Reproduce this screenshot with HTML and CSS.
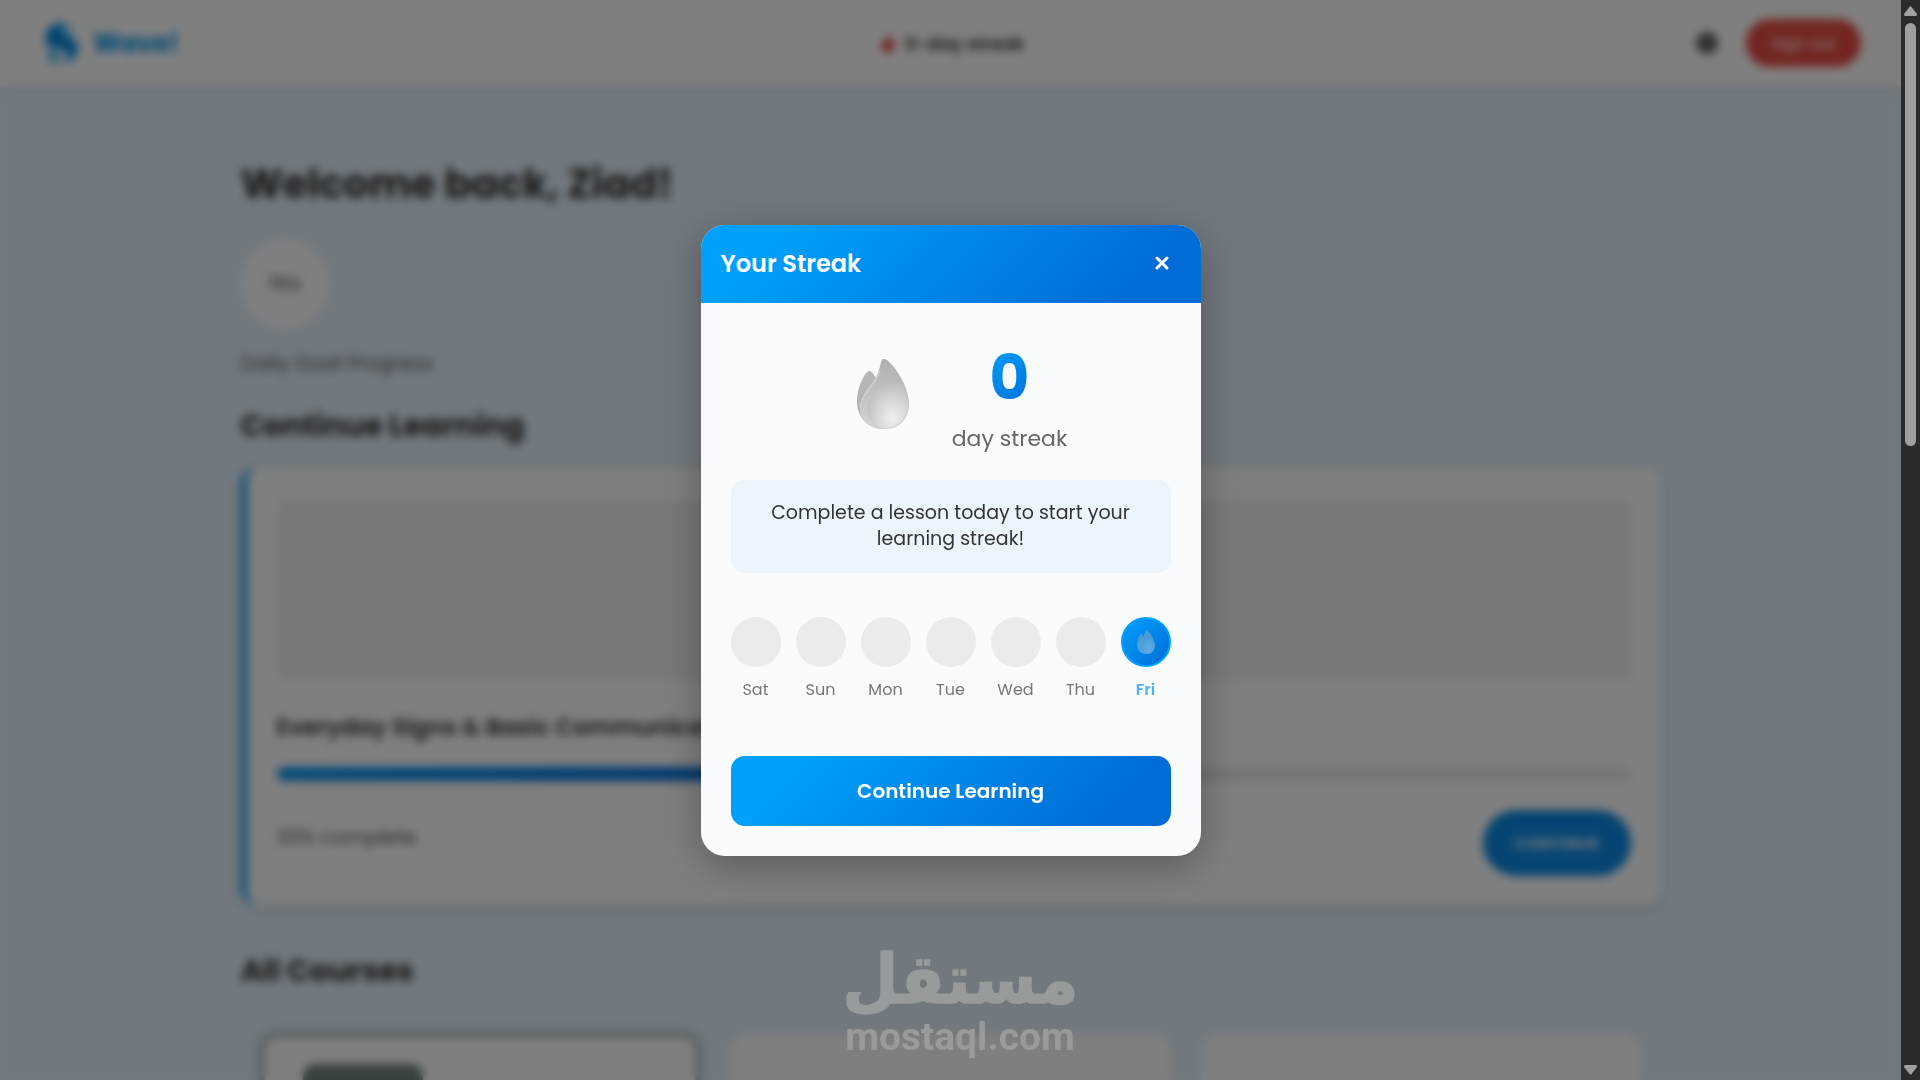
FILE: index.html
```html
<!DOCTYPE html>
<html lang="en">
<head>
    <meta charset="UTF-8">
    <meta name="viewport" content="width=device-width, initial-scale=1.0">
    <title>Wave! - Dashboard</title>
    <link rel="stylesheet" href="styles.css">
</head>
<body>

    <!-- Shared gradients and flame shape -->
    <svg class="svg-defs" width="0" height="0" aria-hidden="true">
        <defs>
            <linearGradient id="flameOuter" x1="0.6" y1="0" x2="0.5" y2="1">
                <stop offset="0" stop-color="#adafb1"/>
                <stop offset="1" stop-color="#d0d2d4"/>
            </linearGradient>
            <radialGradient id="flameInner" cx="0.62" cy="0.8" r="0.75">
                <stop offset="0" stop-color="#edf0f2"/>
                <stop offset="0.45" stop-color="#d7d9db"/>
                <stop offset="1" stop-color="#b8babc"/>
            </radialGradient>
            <symbol id="flame" viewBox="0 0 52 70">
                <path fill="#b3b5b7" d="M12 12C8.500 12.500 0 27 0 43C0 57 10 70 27 70L30 24C24 22 18 19 17 16Q14 11.500 12 12Z"/>
                <path fill="url(#flameOuter)" d="M26 0C23 1 24 10 19 18C12 28 3 37 3 49C3 62 14 70 28 70C43 70 52 59 52 45C52 25 35 4 29 .5Q27-.5 26 0Z"/>
                <path fill="none" stroke="#d0d2d4" stroke-width="1.200" d="M23 12C19 25 5 33 3 49"/>
                <path fill="url(#flameInner)" d="M42 19C28 23 10 37 10 51C10 62 18 69 29 69C42 69 51 58 51 45C51 35 47 27 42 19Z"/>
            </symbol>
        </defs>
    </svg>

    <div class="app">
        <div class="page">
            <header class="navbar">
                <div class="logo">
                    <svg width="35" height="42" viewBox="0 0 35 42">
                        <path fill="#0797f0" d="M14 1C4 3-2 14 3 23C8 30 15 23 21 30C25 34 22 39 16 41C28 40 35 33 34 24C33 17 28 19 27 11C26 4 21 0 14 1Z"/>
                        <path fill="#59bdf5" d="M4 29C10 27 14 30 16 35C17 39 12 41 7 41C4 38 3 33 4 29Z"/>
                        <path fill="none" stroke="#0478d0" stroke-width="5" d="M8 10C9 23 25 14 28 30"/>
                        <path fill="none" stroke="#b5e0fb" stroke-width="5" d="M20 5C21 14 32 12 33 22"/>
                    </svg>
                    <span>Wave!</span>
                </div>
                <div class="streak-pill">
                    <svg width="14" height="18" viewBox="0 0 14 18">
                        <path fill="#e0322c" d="M7 0C8 5 14 7 13 13C12 17 9 18 7 18C3 18 0 15 1 11C2 8 3 8 4 6C5 8 7 5 7 0Z"/>
                    </svg>
                    <span>0-day streak</span>
                </div>
                <div class="nav-actions">
                    <span class="theme-toggle"></span>
                    <button class="sign-out">Sign out</button>
                </div>
            </header>

            <main class="container">
                <h1>Welcome back, Ziad!</h1>
                <div class="goal-circle">75%</div>
                <p class="goal-label">Daily Goal Progress</p>

                <h2 class="continue-title">Continue Learning</h2>
                <section class="course-card">
                    <div class="course-image"></div>
                    <h3>Everyday Signs &amp; Basic Communication</h3>
                    <div class="progress-bar">
                        <div class="progress-fill" style="width: 33%"></div>
                    </div>
                    <div class="course-footer">
                        <span class="percent">33% complete</span>
                        <button class="continue-btn">CONTINUE</button>
                    </div>
                </section>

                <h2 class="courses-title">All Courses</h2>
                <div class="course-grid">
                    <div class="course-tile active"><div class="tile-badge"></div></div>
                    <div class="course-tile"></div>
                    <div class="course-tile"></div>
                </div>
            </main>
        </div>

        <div class="scrollbar">
            <svg width="13" height="10" viewBox="0 0 13 10"><path fill="#a0a0a0" d="M5.500 1Q6.500-.5 7.500 1L13 8Q13 10 12 10H1Q0 10 0 8Z"/></svg>
            <div class="scroll-thumb"></div>
            <svg class="arrow-down" width="13" height="10" viewBox="0 0 13 10"><path fill="#a0a0a0" d="M5.500 9Q6.500 10.500 7.500 9L13 2Q13 0 12 0H1Q0 0 0 2Z"/></svg>
        </div>
    </div>

    <div class="modal-overlay">
        <div class="modal">
            <div class="modal-header">
                <h2>Your Streak</h2>
                <button class="close-btn" aria-label="Close">
                    <svg width="14" height="14" viewBox="0 0 14 14"><path stroke="#fff" stroke-width="3" stroke-linecap="round" d="M2 2L12 12M12 2L2 12"/></svg>
                </button>
            </div>
            <div class="modal-body">
                <div class="streak-display">
                    <svg class="big-flame" width="52" height="70"><use href="#flame"/></svg>
                    <div class="streak-count">
                        <span class="number">0</span>
                        <span class="unit">day streak</span>
                    </div>
                </div>
                <p class="streak-message">Complete a lesson today to start your<br>learning streak!</p>
                <div class="week">
                    <div class="day"><span class="dot"></span><span class="name">Sat</span></div>
                    <div class="day"><span class="dot"></span><span class="name">Sun</span></div>
                    <div class="day"><span class="dot"></span><span class="name">Mon</span></div>
                    <div class="day"><span class="dot"></span><span class="name">Tue</span></div>
                    <div class="day"><span class="dot"></span><span class="name">Wed</span></div>
                    <div class="day"><span class="dot"></span><span class="name">Thu</span></div>
                    <div class="day today">
                        <span class="dot"><svg width="18" height="24"><use href="#flame"/></svg></span>
                        <span class="name">Fri</span>
                    </div>
                </div>
                <button class="modal-btn">Continue Learning</button>
            </div>
        </div>
    </div>

    <div class="watermark">
        <span class="mark-ar" lang="ar" dir="rtl">مستقل</span>
        <span class="mark-en">mostaql.com</span>
    </div>

</body>
</html>
```
FILE: styles.css
```css
* {
    box-sizing: border-box;
    margin: 0;
    padding: 0;
}
body {
    font-family: Poppins, Inter, sans-serif;
    background-color: #e3f2fd;
    color: #333;
    height: 1080px;
    overflow: hidden;
}
button {
    font-family: inherit;
    border: none;
    cursor: pointer;
}
.svg-defs {
    position: absolute;
}
.app {
    display: flex;
    height: 1080px;
}
.page {
    flex: 1;
    height: 1080px;
    overflow: hidden;
}

/* Navbar */
.navbar {
    display: grid;
    grid-template-columns: 1fr auto 1fr;
    align-items: center;
    height: 86px;
    padding: 0 40px 0 44px;
    background-color: #fff;
    box-shadow: 0 2px 10px rgba(0,0,0,0.1);
}
.logo {
    display: flex;
    align-items: center;
    gap: 14px;
    font-size: 25.6px;
    font-weight: 700;
    color: #0797f0;
}
.streak-pill {
    display: flex;
    align-items: center;
    justify-content: center;
    gap: 10px;
    width: 200px;
    height: 52px;
    border-radius: 26px;
    font-size: 18px;
    font-weight: 600;
    box-shadow: 0 2px 8px rgba(0,0,0,0.06);
}
.nav-actions {
    display: flex;
    align-items: center;
    justify-content: flex-end;
    gap: 28px;
}
.theme-toggle {
    width: 22px;
    height: 22px;
    border-radius: 50%;
    background-color: #5c6464;
}
.sign-out {
    width: 115px;
    height: 48px;
    border-radius: 24px;
    background-color: #e74c43;
    color: #fff;
    font-size: 16px;
    font-weight: 400;
}

/* Dashboard */
.container {
    width: 1420px;
    margin: 0 auto;
    padding-top: 68px;
}
h1 {
    font-size: 40px;
    line-height: 60px;
}
.goal-circle {
    width: 88px;
    height: 88px;
    margin-top: 26px;
    border-radius: 50%;
    background-color: #fff;
    text-align: center;
    line-height: 88px;
    font-size: 17px;
    font-weight: 500;
    color: #555;
}
.goal-label {
    margin-top: 20px;
    font-size: 20px;
    line-height: 30px;
    color: #555;
}
.container h2 {
    font-size: 30px;
    line-height: 44px;
}
.container .continue-title {
    margin: 26px 0 20px;
}
.course-card {
    height: 436px;
    padding: 32px 30px 0;
    border-left: 6px solid #109ef2;
    border-radius: 16px;
    background-color: #fff;
    box-shadow: 0 4px 15px rgba(0,0,0,0.1);
}
.course-image {
    height: 182px;
    border-radius: 8px;
    background-color: #f2f2f2;
}
.course-card h3 {
    margin: 27px 0 22px;
    font-size: 23.3px;
    font-weight: 600;
    line-height: 36px;
}
.progress-bar {
    height: 14px;
    border-radius: 7px;
    background-color: #eaeaea;
}
.progress-fill {
    height: 14px;
    border-radius: 7px;
    background: linear-gradient(90deg, #0797f0, #006bd6);
}
.course-footer {
    display: flex;
    justify-content: space-between;
    align-items: flex-start;
    margin-top: 29px;
}
.percent {
    margin-top: 12px;
    font-size: 20px;
    line-height: 30px;
    color: #555;
}
.continue-btn {
    width: 148px;
    height: 66px;
    border-radius: 33px;
    background-color: #0a89e4;
    color: #fff;
    font-size: 16px;
    font-weight: 600;
    letter-spacing: 0.5px;
}
.courses-title {
    margin-top: 45px;
}
.course-grid {
    display: grid;
    grid-template-columns: repeat(3, 1fr);
    gap: 32px;
    margin-top: 41px;
    padding: 0 20px;
}
.course-tile {
    height: 300px;
    border-radius: 16px;
    background-color: #fff;
}
.course-tile.active {
    padding: 26px 38px;
    border: 4px solid #b4c3c6;
    box-shadow: 0 0 4px 3px #b4c3c6;
}
.tile-badge {
    width: 120px;
    height: 80px;
    border-radius: 12px;
    background-color: #6f827b;
}

/* Page scrollbar */
.scrollbar {
    display: flex;
    flex-direction: column;
    align-items: center;
    width: 19px;
    padding: 6px 0 5px;
    background-color: #2b2b2b;
}
.scroll-thumb {
    width: 11px;
    height: 423px;
    margin-top: 7px;
    border-radius: 6px;
    background-color: #9f9f9f;
}
.arrow-down {
    margin-top: auto;
}

/* Streak modal */
.modal-overlay {
    position: absolute;
    top: 0;
    left: 0;
    display: flex;
    align-items: center;
    justify-content: center;
    width: 1901px;
    height: 1080px;
    background-color: rgba(0,0,0,0.5);
    backdrop-filter: blur(5px);
}
.modal {
    width: 500px;
    height: 631px;
    border-radius: 24px;
    background-color: #f9fbfd;
    overflow: hidden;
    box-shadow: 0 10px 40px rgba(0,0,0,0.3);
}
.modal-header {
    display: flex;
    align-items: center;
    justify-content: space-between;
    height: 78px;
    padding: 0 32px 1px 20px;
    background: linear-gradient(135deg, #00a0fb 15%, #006dd6 85%);
    color: #fff;
}
.modal-header h2 {
    font-size: 24px;
    font-weight: 600;
}
.close-btn {
    display: flex;
    background: none;
}
.modal-body {
    padding: 30px;
}
.streak-display {
    display: flex;
    justify-content: center;
    gap: 43px;
    height: 147px;
    padding: 26px 0 0 23px;
}
.streak-count {
    display: flex;
    flex-direction: column;
    align-items: center;
}
.number {
    margin-top: -16px;
    font-size: 61px;
    font-weight: 700;
    line-height: 70px;
    background: linear-gradient(135deg, #00a0fb, #006dd6);
    -webkit-background-clip: text;
    background-clip: text;
    color: transparent;
}
.unit {
    margin-top: 10px;
    font-size: 22px;
    line-height: 32px;
    color: #666;
}
.streak-message {
    height: 93px;
    padding: 20px;
    border-radius: 14px;
    background-color: #ebf5fb;
    text-align: center;
    font-size: 19px;
    line-height: 26px;
    color: #333;
}
.week {
    display: flex;
    justify-content: space-between;
    margin-top: 44px;
}
.day {
    display: flex;
    flex-direction: column;
    align-items: center;
    width: 50px;
}
.dot {
    display: flex;
    align-items: center;
    justify-content: center;
    width: 50px;
    height: 50px;
    border-radius: 50%;
    background-color: #e8ecef;
}
.name {
    margin-top: 10px;
    font-size: 16px;
    line-height: 26px;
    color: #777;
}
.today .dot {
    border: 2px solid #00a0fb;
    background: linear-gradient(135deg, #00a0fb, #006dd6);
}
.today .dot svg {
    opacity: 0.4;
}
.today .name {
    font-weight: 600;
    color: #4db2f5;
}
.modal-btn {
    width: 440px;
    height: 70px;
    margin-top: 53px;
    border-radius: 14px;
    background: linear-gradient(135deg, #00a0fb 15%, #006dd6 85%);
    color: #fff;
    font-size: 20px;
    font-weight: 600;
}

/* Watermark in front of everything */
.watermark {
    position: absolute;
    left: 845px;
    top: 950px;
    display: flex;
    flex-direction: column;
    align-items: center;
    width: 230px;
    color: #979b9c;
}
.mark-ar {
    font-family: "DejaVu Sans", sans-serif;
    font-size: 68px;
    font-weight: 700;
    line-height: 60px;
    white-space: nowrap;
    transform: scaleX(0.95);
    -webkit-text-stroke: 1.5px #979b9c;
}
.mark-en {
    margin-top: 10px;
    font-family: Roboto, sans-serif;
    font-size: 39px;
    font-weight: 700;
    line-height: 34px;
}
```
